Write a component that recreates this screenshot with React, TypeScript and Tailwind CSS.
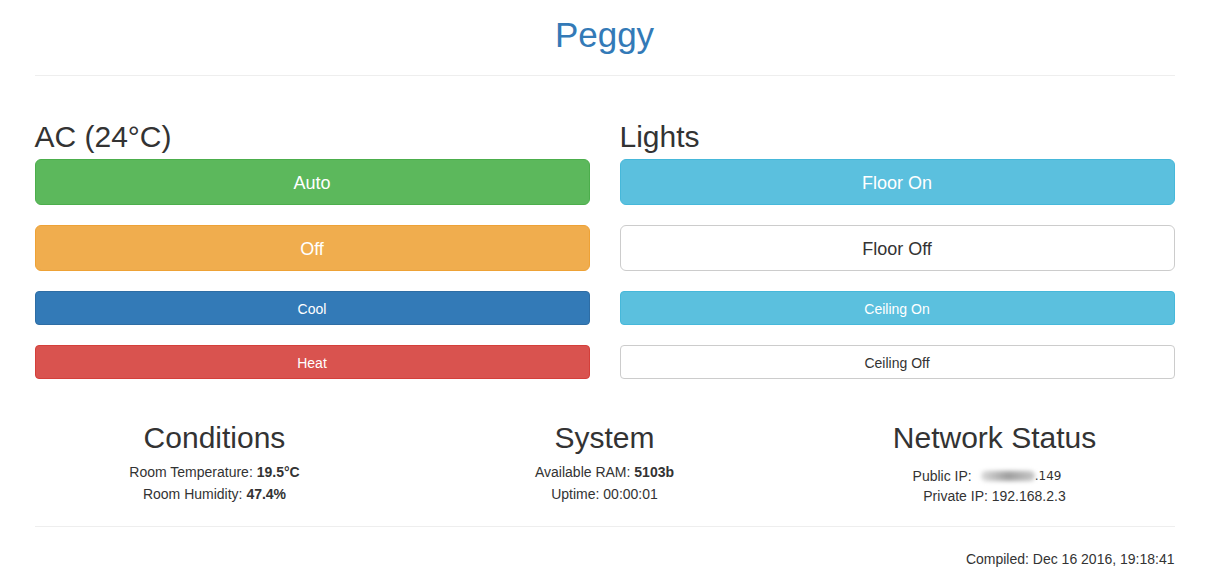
import React from "react";

const font = { fontFamily: '"Liberation Sans", Arial, Helvetica, sans-serif' };

function BtnLg({ cls, children }: { cls: string; children: React.ReactNode }) {
  return (
    <div
      className={`flex h-[46px] w-full items-center justify-center rounded-[6px] border pt-px text-[18px] leading-[24px] ${cls}`}
    >
      {children}
    </div>
  );
}

function Btn({ cls, children }: { cls: string; children: React.ReactNode }) {
  return (
    <div
      className={`flex h-[34px] w-full items-center justify-center rounded-[4px] border pt-px text-[14px] leading-[20px] ${cls}`}
    >
      {children}
    </div>
  );
}

export default function App() {
  return (
    <div className="min-h-screen bg-white text-[#333]" style={font}>
      <div className="mx-auto w-[1170px] px-[15px]">
        <h1 className="mt-[15px] text-center text-[35px] leading-[40px] text-[#337ab7]">Peggy</h1>
        <div className="mt-[20px] h-px bg-[#eee]" />

        <div className="grid grid-cols-2 gap-[30px]">
          <div>
            <h2 className="mb-[6px] mt-[44px] text-[30px] leading-[33px]">AC (24°C)</h2>
            <div className="flex flex-col gap-[20px]">
              <BtnLg cls="bg-[#5cb85c] border-[#4cae4c] text-white">Auto</BtnLg>
              <BtnLg cls="bg-[#f0ad4e] border-[#eea236] text-white">Off</BtnLg>
              <Btn cls="bg-[#337ab7] border-[#2e6da4] text-white">Cool</Btn>
              <Btn cls="bg-[#d9534f] border-[#d43f3a] text-white">Heat</Btn>
            </div>
          </div>
          <div>
            <h2 className="mb-[6px] mt-[44px] text-[30px] leading-[33px]">Lights</h2>
            <div className="flex flex-col gap-[20px]">
              <BtnLg cls="bg-[#5bc0de] border-[#46b8da] text-white">Floor On</BtnLg>
              <BtnLg cls="bg-white border-[#ccc] text-[#333]">Floor Off</BtnLg>
              <Btn cls="bg-[#5bc0de] border-[#46b8da] text-white">Ceiling On</Btn>
              <Btn cls="bg-white border-[#ccc] text-[#333]">Ceiling Off</Btn>
            </div>
          </div>
        </div>

        <div className="mt-[42px] grid grid-cols-3 gap-[30px] text-center">
          <div>
            <h2 className="text-[30px] leading-[33px]">Conditions</h2>
            <div className="mt-[7px] text-[14px] leading-[22px]">
              <div>
                Room Temperature: <b>19.5°C</b>
              </div>
              <div>
                Room Humidity: <b>47.4%</b>
              </div>
            </div>
          </div>
          <div>
            <h2 className="text-[30px] leading-[33px]">System</h2>
            <div className="mt-[7px] text-[14px] leading-[22px]">
              <div>
                Available RAM: <b>5103b</b>
              </div>
              <div>Uptime: 00:00:01</div>
            </div>
          </div>
          <div>
            <h2 className="text-[30px] leading-[33px]">Network Status</h2>
            <div className="mt-[12px] text-[14px] leading-[20px]">
              <div className="flex items-center justify-center pr-[15px]">
                <span>Public IP:</span>
                <span className="ml-[9px] inline-block h-[10px] w-[54px] rounded-full bg-gradient-to-r from-[#dcdcdc] via-[#9f9f9f] to-[#c8c8c8] blur-[2px]" />
                <span className="text-[12px]" style={{ fontFamily: '"DejaVu Sans", sans-serif' }}>
                  .149
                </span>
              </div>
              <div>Private IP: 192.168.2.3</div>
            </div>
          </div>
        </div>

        <div className="mt-[20px] h-px bg-[#eee]" />
        <div className="mt-[22px] text-right text-[14px] leading-[20px]">Compiled: Dec 16 2016, 19:18:41</div>
      </div>
    </div>
  );
}
